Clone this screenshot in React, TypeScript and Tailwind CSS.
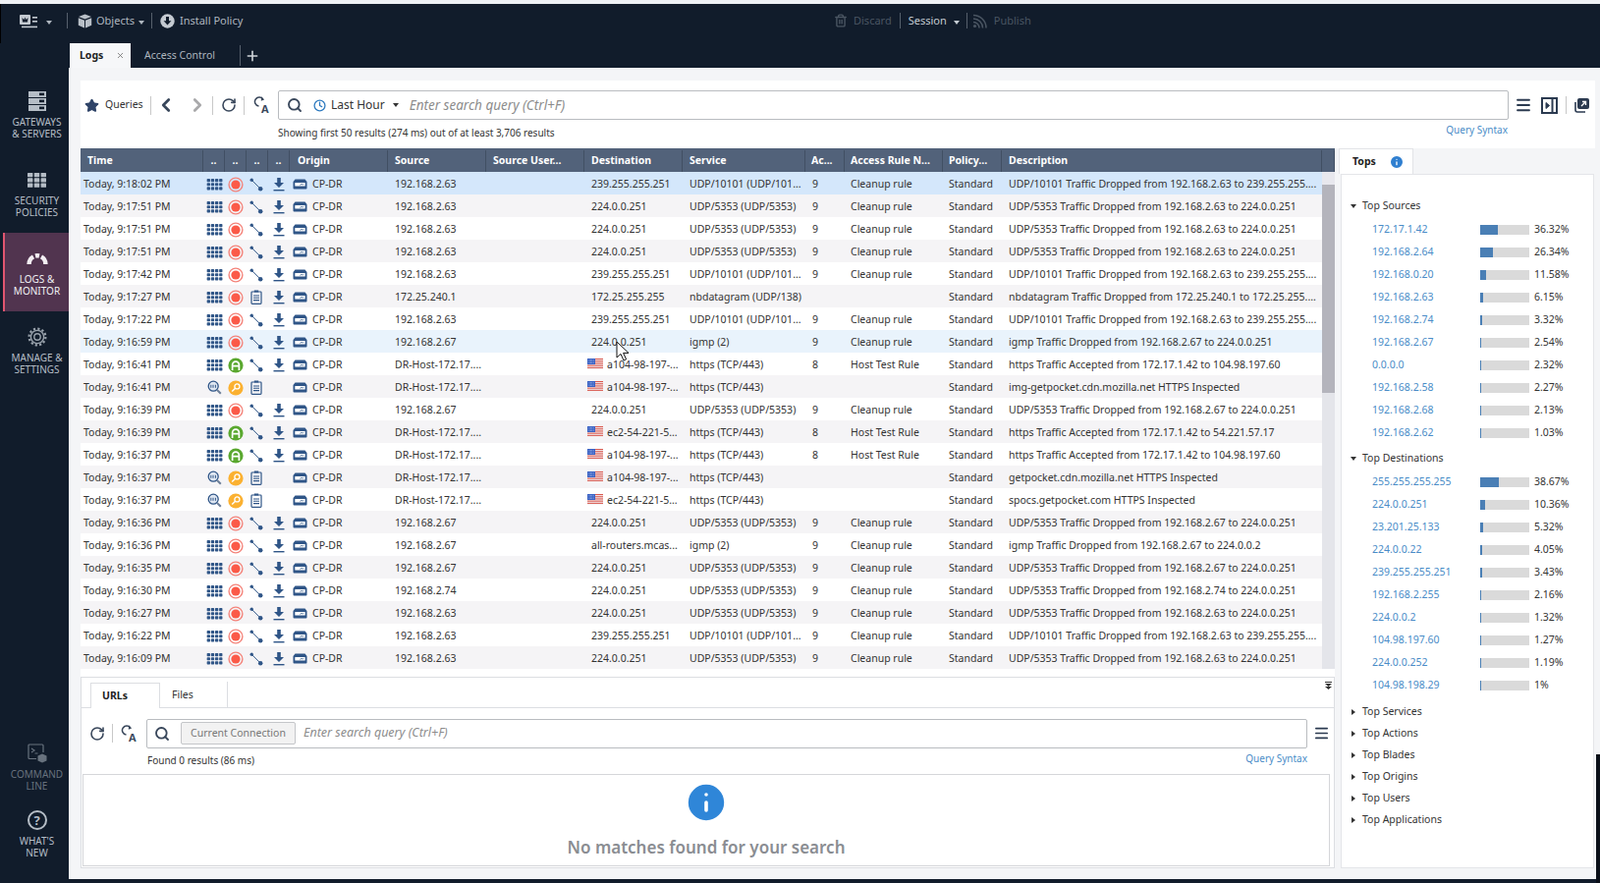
import React from 'react';
import { ChevronLeft, ChevronRight, Clock, Info, Menu, Plus, RotateCw, Search, Star, Trash2, X } from 'lucide-react';

const BLUE = '#2f5587';

const Caret = ({ className = 'border-t-[#aeb6bf]' }: { className?: string }) => (
  <span className={`inline-block w-0 h-0 border-x-[3.5px] border-x-transparent border-t-[4px] ${className}`} />
);

const GridIcon = () => (
  <svg width="17" height="12" viewBox="0 0 17 13" fill={BLUE}>
    {[0, 4.5, 9].map((y) =>
      [0, 4.5, 9, 13.5].map((x) => <rect key={`${x}-${y}`} x={x} y={y} width="3.6" height="3.4" rx="0.8" />)
    )}
  </svg>
);

const DropIcon = () => (
  <svg width="16" height="16" viewBox="0 0 16 16">
    <circle cx="8" cy="8" r="6.9" fill="none" stroke="#f4837a" strokeWidth="1.4" />
    <circle cx="8" cy="8" r="4.6" fill="#fb5a48" />
  </svg>
);

const AcceptIcon = () => (
  <svg width="16" height="16" viewBox="0 0 16 16">
    <circle cx="8" cy="8" r="7.6" fill="#5aa82f" />
    <path d="M4.6 13V7.5A3.4 3.4 0 0 1 11.4 7.5V13M4.6 8.6H11.4" fill="none" stroke="#fff" strokeWidth="1.7" />
  </svg>
);

const KeyIcon = () => (
  <svg width="16" height="16" viewBox="0 0 16 16">
    <circle cx="8" cy="8" r="7.6" fill="#fbb131" />
    <circle cx="9.4" cy="6.4" r="2.5" fill="none" stroke="#fff" strokeWidth="1.3" />
    <path d="M7.6 8.2 4.2 11.6" stroke="#fff" strokeWidth="1.4" />
  </svg>
);

const InspectIcon = () => (
  <svg width="15" height="15" viewBox="0 0 15 15">
    <circle cx="6.2" cy="6.2" r="5" fill="#dfe7f2" stroke={BLUE} strokeWidth="1.3" />
    <path d="M3.8 4.8v3M6 4.8v3M8.4 4.8v3" stroke={BLUE} strokeWidth="1" />
    <path d="M10 10l3.8 3.8" stroke="#6d7f99" strokeWidth="2" />
  </svg>
);

const NodesIcon = () => (
  <svg width="14" height="14" viewBox="0 0 15 15" fill={BLUE}>
    <path d="M2.5 2.5 12 12" stroke={BLUE} strokeWidth="1" />
    <circle cx="2.4" cy="2.4" r="1.8" />
    <circle cx="12" cy="12" r="2.4" />
  </svg>
);

const DocIcon = () => (
  <svg width="12" height="15" viewBox="0 0 12 15" fill="none" stroke={BLUE}>
    <rect x="1" y="2" width="10" height="12.4" rx="0.8" strokeWidth="1.2" />
    <path d="M3.8 1.5h4.4" strokeWidth="2" />
    <path d="M3 6h6M3 8.3h6M3 10.6h6" strokeWidth="1.1" />
  </svg>
);

const DownloadIcon = () => (
  <svg width="12" height="14" viewBox="0 0 12 14" fill={BLUE}>
    <path d="M4.2 0h3.6v5H11L6 10 1 5h3.2z" />
    <rect x="0.5" y="12" width="11" height="1.4" />
  </svg>
);

const GatewayIcon = () => (
  <svg width="15" height="11" viewBox="0 0 15 11">
    <path d="M2.5 0.5h10l2 2.5v6.5a1 1 0 0 1-1 1h-12a1 1 0 0 1-1-1V3z" fill={BLUE} />
    <rect x="2.3" y="4" width="10.4" height="3.6" rx="0.6" fill="#fff" />
    <path d="M7.5 6.6 9 5.2l1 1 1-1" stroke={BLUE} strokeWidth="0.8" fill="none" />
  </svg>
);

const Flag = () => (
  <svg width="16" height="11" viewBox="0 0 16 11" className="shrink-0 -mt-[2px]">
    <rect width="16" height="11" fill="#f4f0f0" />
    {[0, 2.2, 4.4, 6.6, 8.8].map((y) => (
      <rect key={y} y={y} width="16" height="1.1" fill="#d9584f" />
    ))}
    <rect width="8" height="6" fill="#3a62c4" />
    <path d="M1.5 1.5h5M1.5 3h5M1.5 4.5h5" stroke="#cfdaf5" strokeWidth="0.6" strokeDasharray="0.8 0.7" />
  </svg>
);

const RefreshA = ({ color = '#39475b' }: { color?: string }) => (
  <svg width="19" height="20" viewBox="0 0 19 20" fill="none">
    <path d="M10 4.5A4.5 4.5 0 1 0 5.5 11" stroke={color} strokeWidth="1.5" />
    <path d="M8 1.2l3 3.2-3.2 1.4z" fill={color} />
    <text x="8" y="18" fontSize="11" fontWeight="700" fill={color} fontFamily="Open Sans, sans-serif">A</text>
  </svg>
);

type Row = {
  time: string;
  a: 'drop' | 'accept' | 'key';
  nodes: boolean;
  src: string;
  dst: string;
  flag?: boolean;
  svc: string;
  ac: string;
  rule: string;
  desc: string;
};

const udp10101 = 'UDP/10101 (UDP/101...';
const udp5353 = 'UDP/5353 (UDP/5353)';
const host = 'DR-Host-172.17....';
const https = 'https (TCP/443)';
const a104 = 'a104-98-197-...';
const ec2 = 'ec2-54-221-5...';

const drop10101 = (time: string): Row => ({
  time, a: 'drop', nodes: true, src: '192.168.2.63', dst: '239.255.255.251', svc: udp10101, ac: '9', rule: 'Cleanup rule',
  desc: 'UDP/10101 Traffic Dropped from 192.168.2.63 to 239.255.255....',
});
const drop5353 = (time: string, src: string): Row => ({
  time, a: 'drop', nodes: true, src, dst: '224.0.0.251', svc: udp5353, ac: '9', rule: 'Cleanup rule',
  desc: `UDP/5353 Traffic Dropped from ${src} to 224.0.0.251`,
});
const accept = (time: string, dst: string, to: string): Row => ({
  time, a: 'accept', nodes: true, src: host, dst, flag: true, svc: https, ac: '8', rule: 'Host Test Rule',
  desc: `https Traffic Accepted from 172.17.1.42 to ${to}`,
});
const inspect = (time: string, dst: string, desc: string): Row => ({
  time, a: 'key', nodes: false, src: host, dst, flag: true, svc: https, ac: '', rule: '', desc,
});

const rows: Row[] = [
  drop10101('Today, 9:18:02 PM'),
  drop5353('Today, 9:17:51 PM', '192.168.2.63'),
  drop5353('Today, 9:17:51 PM', '192.168.2.63'),
  drop5353('Today, 9:17:51 PM', '192.168.2.63'),
  drop10101('Today, 9:17:42 PM'),
  {
    time: 'Today, 9:17:27 PM', a: 'drop', nodes: false, src: '172.25.240.1', dst: '172.25.255.255', svc: 'nbdatagram (UDP/138)', ac: '', rule: '',
    desc: 'nbdatagram Traffic Dropped from 172.25.240.1 to 172.25.255....',
  },
  drop10101('Today, 9:17:22 PM'),
  {
    time: 'Today, 9:16:59 PM', a: 'drop', nodes: true, src: '192.168.2.67', dst: '224.0.0.251', svc: 'igmp (2)', ac: '9', rule: 'Cleanup rule',
    desc: 'igmp Traffic Dropped from 192.168.2.67 to 224.0.0.251',
  },
  accept('Today, 9:16:41 PM', a104, '104.98.197.60'),
  inspect('Today, 9:16:41 PM', a104, 'img-getpocket.cdn.mozilla.net HTTPS Inspected'),
  drop5353('Today, 9:16:39 PM', '192.168.2.67'),
  accept('Today, 9:16:39 PM', ec2, '54.221.57.17'),
  accept('Today, 9:16:37 PM', a104, '104.98.197.60'),
  inspect('Today, 9:16:37 PM', a104, 'getpocket.cdn.mozilla.net HTTPS Inspected'),
  inspect('Today, 9:16:37 PM', ec2, 'spocs.getpocket.com HTTPS Inspected'),
  drop5353('Today, 9:16:36 PM', '192.168.2.67'),
  {
    time: 'Today, 9:16:36 PM', a: 'drop', nodes: true, src: '192.168.2.67', dst: 'all-routers.mcas...', svc: 'igmp (2)', ac: '9', rule: 'Cleanup rule',
    desc: 'igmp Traffic Dropped from 192.168.2.67 to 224.0.0.2',
  },
  drop5353('Today, 9:16:35 PM', '192.168.2.67'),
  drop5353('Today, 9:16:30 PM', '192.168.2.74'),
  drop5353('Today, 9:16:27 PM', '192.168.2.63'),
  drop10101('Today, 9:16:22 PM'),
  drop5353('Today, 9:16:09 PM', '192.168.2.63'),
];

const headers: [string, string][] = [
  ['Time', 'pl-[7px]'],
  ['..', 'justify-center'],
  ['..', 'justify-center'],
  ['..', 'justify-center'],
  ['..', 'justify-center'],
  ['Origin', 'pl-[8px]'],
  ['Source', 'pl-[7px]'],
  ['Source User...', 'pl-[7px]'],
  ['Destination', 'pl-[7px]'],
  ['Service', 'pl-[7px]'],
  ['Ac...', 'pl-[6px]'],
  ['Access Rule N...', 'pl-[6px]'],
  ['Policy...', 'pl-[6px]'],
  ['Description', 'pl-[7px]'],
  ['', ''],
];

const topSources: [string, string][] = [
  ['172.17.1.42', '36.32'], ['192.168.2.64', '26.34'], ['192.168.0.20', '11.58'], ['192.168.2.63', '6.15'], ['192.168.2.74', '3.32'],
  ['192.168.2.67', '2.54'], ['0.0.0.0', '2.32'], ['192.168.2.58', '2.27'], ['192.168.2.68', '2.13'], ['192.168.2.62', '1.03'],
];
const topDestinations: [string, string][] = [
  ['255.255.255.255', '38.67'], ['224.0.0.251', '10.36'], ['23.201.25.133', '5.32'], ['224.0.0.22', '4.05'], ['239.255.255.251', '3.43'],
  ['192.168.2.255', '2.16'], ['224.0.0.2', '1.32'], ['104.98.197.60', '1.27'], ['224.0.0.252', '1.19'], ['104.98.198.29', '1'],
];

const NavItem = ({ icon, lines, active, dim }: { icon: React.ReactNode; lines: string[]; active?: boolean; dim?: boolean }) => (
  <div
    className={`flex flex-col items-center ml-[3px] w-[67px] h-[80px] pt-[14px] border-l-[2px] ${
      active ? 'bg-[#51344f] border-[#e0566f] text-[#f0f0f3]' : dim ? 'border-transparent text-[#68727e]' : 'border-transparent text-[#b5bdc6]'
    }`}
  >
    <div className="h-[24px] flex items-center justify-center">{icon}</div>
    <div className="mt-[3px] text-center text-[10px] leading-[12px]">
      {lines.map((l) => (
        <div key={l}>{l}</div>
      ))}
    </div>
  </div>
);

const TopRow = ({ name, pct }: { name: string; pct: string }) => (
  <div className="flex items-center h-[23px] pl-[31px]">
    <div className="w-[110px] text-[#4a8cc7]">{name}</div>
    <div className="w-[50px] h-[10px] bg-[#dadada]">
      <div className="h-full bg-[#4a7fb5]" style={{ width: `${parseFloat(pct)}%` }} />
    </div>
    <div className="ml-[5px] text-[#333]">{pct}%</div>
  </div>
);

const TopHead = ({ label, open }: { label: string; open?: boolean }) => (
  <div className="flex items-center h-[22px] pl-[8px] gap-[6px] text-[#333]">
    <span className="w-[7px] flex justify-center">
      {open ? (
        <Caret className="border-t-[#333]" />
      ) : (
        <span className="inline-block w-0 h-0 border-y-[3.5px] border-y-transparent border-l-[4px] border-l-[#333]" />
      )}
    </span>
    {label}
  </div>
);

const LogRow = ({ row, i }: { row: Row; i: number }) => {
  const bg = i === 0 ? 'bg-[#d4e7fb]' : i === 7 ? 'bg-[#e9f3fc]' : i % 2 ? 'bg-[#f5f4f6]' : 'bg-white';
  return (
    <div className={`grid grid-cols-[125px_22px_22px_22px_22px_100px_100px_100px_100px_125px_40px_100px_60px_326px] h-[23px] pt-[2px] items-center whitespace-nowrap ${bg}`}>
      <div className="pl-[3px]">{row.time}</div>
      <div className="flex justify-center pl-[1px]">{row.a === 'key' ? <InspectIcon /> : <GridIcon />}</div>
      <div className="flex justify-center">
        {row.a === 'drop' ? <DropIcon /> : row.a === 'accept' ? <AcceptIcon /> : <KeyIcon />}
      </div>
      <div className="flex justify-center pr-[2px]">{row.nodes ? <NodesIcon /> : <DocIcon />}</div>
      <div className="flex justify-center pr-[1px]">{row.a === 'key' ? null : <DownloadIcon />}</div>
      <div className="flex items-center pl-[3px] gap-[5px]">
        <GatewayIcon />
        CP-DR
      </div>
      <div className="pl-[7px]">{row.src}</div>
      <div />
      {row.flag ? (
        <div className="flex items-center pl-[3px] gap-[4px]">
          <Flag />
          {row.dst}
        </div>
      ) : (
        <div className="pl-[7px]">{row.dst}</div>
      )}
      <div className="pl-[7px]">{row.svc}</div>
      <div className="pl-[7px]">{row.ac}</div>
      <div className="pl-[6px]">{row.rule}</div>
      <div className="pl-[6px]">Standard</div>
      <div className="pl-[7px] overflow-hidden">{row.desc}</div>
    </div>
  );
};

export default function App() {
  return (
    <div className="relative flex flex-col w-[1629px] h-[899px] overflow-hidden bg-[#111c2b] text-[10.5px] text-[#333] font-['Open_Sans',sans-serif]">
      <div className="h-[4px] shrink-0 bg-[#eef1f5]" />

      {/* top bar */}
      <div className="h-[40px] shrink-0 flex items-start pt-[9px] relative text-[11px] text-[#aeb6bf] border-l border-black">
        <div className="flex items-center h-[16px] pl-[19px]">
          <svg width="18" height="15" viewBox="0 0 18 15" fill="#c4cad1">
            <rect x="0" y="1" width="11" height="10" rx="1" />
            <rect x="13" y="3" width="5" height="1.6" />
            <rect x="13" y="7" width="5" height="1.6" />
            <rect x="2" y="12.6" width="16" height="1.6" />
            <path d="M2.5 4 4.5 6 5.5 3.5 6.5 6 8.5 4 8 8.5H3z" fill="#111c2b" />
          </svg>
          <span className="ml-[9px]"><Caret /></span>
          <span className="ml-[15px] h-[16px] border-l border-[#56606c]" />
          <svg className="ml-[10px]" width="15" height="15" viewBox="0 0 15 15" fill="#b8bfc7">
            <path d="M7.5 0.5 14 3 7.5 5.6 1 3z" />
            <path d="M0.8 4.2 7 6.7V14.5L0.8 11.8zM14.2 4.2 8 6.7V14.5L14.2 11.8z" />
          </svg>
          <span className="ml-[4px]">Objects</span>
          <span className="ml-[4px]"><Caret /></span>
          <span className="ml-[7px] h-[16px] border-l border-[#56606c]" />
          <svg className="ml-[8px]" width="15" height="15" viewBox="0 0 15 15">
            <circle cx="7.5" cy="7.5" r="7.2" fill="#c4cad1" />
            <path d="M6 3h3v4.2h2.4L7.5 11.6 3.6 7.2H6z" fill="#111c2b" />
          </svg>
          <span className="ml-[5px]">Install Policy</span>
        </div>
        <div className="flex items-center h-[16px] absolute left-[848px] top-[9px]">
          <Trash2 size={14} color="#4a5562" strokeWidth={2.4} />
          <span className="ml-[6px] text-[#4a5562]">Discard</span>
          <span className="ml-[8px] h-[16px] border-l border-[#56606c]" />
          <span className="ml-[8px] text-[#c5ccd3]">Session</span>
          <span className="ml-[7px]"><Caret className="border-t-[#c5ccd3]" /></span>
          <span className="ml-[7px] h-[16px] border-l border-[#56606c]" />
          <svg className="ml-[5px]" width="16" height="16" viewBox="0 0 16 16" fill="none" stroke="#4a5562" strokeWidth="1.5">
            <path d="M1 6a9.5 9.5 0 0 1 9.5 9.5M1 2.5a13 13 0 0 1 13 13M1 9.5a6 6 0 0 1 6 6" />
            <circle cx="2.5" cy="13.5" r="1.6" fill="#4a5562" stroke="none" />
          </svg>
          <span className="ml-[6px] text-[#4a5562]">Publish</span>
        </div>
      </div>

      {/* tab strip */}
      <div className="h-[25px] shrink-0 flex items-stretch pl-[71px] text-[#aeb6bf]">
        <div className="w-[62px] bg-[#f6f7f9] flex items-center pl-[10px] text-[#222] font-bold">
          Logs
          <X size={9} className="ml-[13px] text-[#666]" />
        </div>
        <div className="ml-[14px] flex items-center w-[97px]">Access Control</div>
        <div className="my-[2px] border-l border-[#56606c]" />
        <div className="ml-[4px] flex items-center">
          <Plus size={16} color="#d0d5da" strokeWidth={2.4} />
        </div>
      </div>

      <div className="flex-1 flex min-h-0">
        {/* sidebar */}
        <nav className="w-[71px] shrink-0 flex flex-col pt-[8px] pb-[22px] border-l border-black -ml-px">
          <NavItem
            lines={['GATEWAYS', '& SERVERS']}
            icon={
              <svg width="18" height="20" viewBox="0 0 18 20" fill="#b5bdc6">
                {[0, 7, 14].map((y) => (
                  <g key={y}>
                    <rect y={y} width="18" height="6" />
                    <rect x="11" y={y + 1.6} width="5" height="2.6" fill="#111c2b" />
                  </g>
                ))}
              </svg>
            }
          />
          <NavItem
            lines={['SECURITY', 'POLICIES']}
            icon={
              <svg width="19" height="15" viewBox="0 0 19 15" fill="#b5bdc6">
                {[0, 5.3, 10.6].map((y) =>
                  [0, 6.8, 13.6].map((x) => <rect key={`${x}-${y}`} x={x} y={y} width="5.4" height="4.2" rx="0.6" />)
                )}
              </svg>
            }
          />
          <NavItem
            active
            lines={['LOGS &', 'MONITOR']}
            icon={
              <svg width="22" height="14" viewBox="0 0 22 14" fill="none" stroke="#f3eef3" strokeWidth="4.5">
                <path d="M2.6 13A8.6 8.6 0 0 1 7 5.4M9 4.5a8.6 8.6 0 0 1 4 0M15 5.4A8.6 8.6 0 0 1 19.4 13" />
              </svg>
            }
          />
          <NavItem
            lines={['MANAGE &', 'SETTINGS']}
            icon={
              <svg width="20" height="20" viewBox="0 0 20 20" fill="none" stroke="#99a2ac">
                <circle cx="10" cy="10" r="6.6" strokeWidth="1.4" />
                <circle cx="10" cy="10" r="3.2" strokeWidth="1.4" />
                <circle cx="10" cy="10" r="8.4" strokeWidth="2.2" strokeDasharray="2.2 2.2" />
              </svg>
            }
          />
          <div className="flex-1" />
          <div className="h-[68px] overflow-visible">
            <NavItem
              dim
              lines={['COMMAND', 'LINE']}
              icon={
                <svg width="20" height="20" viewBox="0 0 20 20" fill="none" stroke="#68727e" strokeWidth="1.2">
                  <path d="M9 15.5H2a1 1 0 0 1-1-1V2a1 1 0 0 1 1-1h13a1 1 0 0 1 1 1v7" />
                  <path d="M4 5l3 2-3 2M7.5 10h3" />
                  <path d="M15 10.5l4.5 2v5l-4.5 2-4.5-2v-5z" fill="#68727e" stroke="none" />
                </svg>
              }
            />
          </div>
          <div className="h-[68px] overflow-visible">
            <NavItem
              lines={["WHAT'S", 'NEW']}
              icon={
                <div className="w-[20px] h-[20px] rounded-full border-[2px] border-[#b5bdc6] flex items-center justify-center text-[13px] font-bold leading-none text-[#b5bdc6]">
                  ?
                </div>
              }
            />
          </div>
        </nav>

        {/* main area */}
        <main className="w-[1555px] mb-[4px] shrink-0 bg-[#f4f5f7] pt-[13px] pl-[12px] flex flex-col min-h-0">
          {/* toolbar */}
          <div className="h-[69px] w-[1542px] shrink-0 bg-white pt-[2px]">
            <div className="flex items-center h-[46px] pl-[4px]">
              <Star size={15} fill="#2f4468" color="#2f4468" />
              <span className="ml-[6px] w-[40px]">Queries</span>
              <span className="ml-[6px] h-[19px] border-l border-[#c8c8c8]" />
              <ChevronLeft size={22} color="#39475b" strokeWidth={3} className="ml-[4px]" />
              <ChevronRight size={22} color="#a9a9ab" strokeWidth={3} className="ml-[10px]" />
              <span className="ml-[4px] h-[19px] border-l border-[#c8c8c8]" />
              <RotateCw size={16} color="#39475b" strokeWidth={2.4} className="ml-[8px]" />
              <span className="ml-[7px] h-[19px] border-l border-[#c8c8c8]" />
              <span className="ml-[9px]"><RefreshA /></span>
              <div className="ml-[6px] w-[1253px] h-[30px] flex items-center border border-[#b9bcc0] rounded-[2px] pl-[8px]">
                <Search size={16} color="#39475b" strokeWidth={2.8} />
                <Clock size={13} color="#2f7bc0" strokeWidth={2.4} className="ml-[11px]" />
                <span className="ml-[5px] text-[12px]">Last Hour</span>
                <span className="ml-[8px] flex"><Caret className="border-t-[#333]" /></span>
                <span className="ml-[11px] italic text-[13.5px] text-[#8c8c8c]">Enter search query (Ctrl+F)</span>
              </div>
              <Menu size={18} color="#2b3a50" strokeWidth={2.4} className="ml-[6px]" />
              <svg className="ml-[9px]" width="17" height="17" viewBox="0 0 17 17" fill="none" stroke="#2b3a50">
                <rect x="1" y="1" width="15" height="15" strokeWidth="2" />
                <path d="M11.5 1v15" strokeWidth="2" />
                <path d="M5 5.5 8.5 8.5 5 11.5z" fill="#2b3a50" />
              </svg>
              <span className="ml-[8px] h-[18px] border-l border-[#c8c8c8]" />
              <svg className="ml-[8px]" width="15" height="15" viewBox="0 0 15 15">
                <rect x="3" y="0" width="12" height="11" rx="2" fill="#2b3a50" />
                <path d="M1 4v8a2 2 0 0 0 2 2h8" fill="none" stroke="#2b3a50" strokeWidth="1.6" />
                <path d="M7 8l4-4M8 3.5h3.5V7" stroke="#fff" strokeWidth="1.3" fill="none" />
              </svg>
            </div>
            <div className="flex justify-between w-[1453px] pl-[201px] -mt-[1px] leading-[12px] text-[10px]">
              <span>Showing first 50 results (274 ms) out of at least 3,706 results</span>
              <span className="text-[#4a8cc7] -mt-[3px]">Query Syntax</span>
            </div>
          </div>

          <div className="flex-1 flex min-h-0 mb-[11px]">
            {/* log table + details */}
            <div className="w-[1277px] shrink-0 flex flex-col bg-white">
              <div className="grid grid-cols-[125px_22px_22px_22px_22px_100px_100px_100px_100px_125px_40px_100px_60px_326px_13px] h-[24px] pt-[2px] shrink-0 bg-[#52627a] text-white font-bold whitespace-nowrap">
                {headers.map(([h, cls], i) => (
                  <div key={i} className={`flex items-center border-r border-[#414f63] ${cls}`}>
                    {h}
                  </div>
                ))}
              </div>
              <div className="h-[506px] shrink-0 flex">
                <div className="w-[1264px] overflow-hidden">
                  {rows.map((row, i) => (
                    <LogRow key={i} row={row} i={i} />
                  ))}
                </div>
                <div className="w-[13px] bg-[#e4e5ea]">
                  <div className="h-[13px] bg-[#e8e8ee]" />
                  <div className="h-[212px] bg-[#b4b4bc]" />
                </div>
              </div>

              {/* details pane */}
              <div className="mt-[8px] flex-1 flex flex-col border border-[#dcdee2] bg-white min-h-0">
                <div className="relative h-[31px] shrink-0 flex items-end pl-[9px] border-b border-[#dcdee2]">
                  <div className="w-[71px] h-[26px] pt-[1px] -mb-px bg-white border border-b-0 border-[#dcdee2] flex items-center pl-[11px] font-bold text-[#222]">
                    URLs
                  </div>
                  <div className="w-[69px] h-[26px] pt-[2px] flex items-center pl-[12px] border-r border-[#dcdee2]">Files</div>
                  <svg className="absolute right-[2px] top-[4px]" width="7" height="9" viewBox="0 0 7 9" fill="#333">
                    <path d="M0 0h7v1H0zM0 2h7L3.5 5zM0 5h7L3.5 8z" />
                  </svg>
                </div>
                <div className="flex items-center h-[41px] pt-[10px] shrink-0 pl-[8px]">
                  <RotateCw size={16} color="#39475b" strokeWidth={2.4} />
                  <span className="ml-[7px] h-[19px] border-l border-[#c8c8c8]" />
                  <span className="ml-[8px]"><RefreshA /></span>
                  <div className="ml-[7px] w-[1182px] h-[30px] flex items-center border border-[#b9bcc0] rounded-[2px] pl-[7px]">
                    <Search size={16} color="#39475b" strokeWidth={2.8} />
                    <span className="ml-[11px] w-[117px] h-[23px] bg-[#f2f2f2] border border-[#c4c6c9] rounded-[2px] flex items-center justify-center text-[#777] text-[10.5px]">
                      Current Connection
                    </span>
                    <span className="ml-[8px] italic text-[12.5px] text-[#8c8c8c]">Enter search query (Ctrl+F)</span>
                  </div>
                  <Menu size={17} color="#2b3a50" strokeWidth={2.4} className="ml-[6px]" />
                </div>
                <div className="flex justify-between shrink-0 w-[1248px] pl-[67px] pt-[5px] h-[26px] text-[10px]">
                  <span>Found 0 results (86 ms)</span>
                  <span className="text-[#4a8cc7] -mt-[2px]">Query Syntax</span>
                </div>
                <div className="flex-1 mx-[1px] mb-[1px] mr-[4px] border border-[#d5d6d9] flex flex-col items-center pt-[4px]">
                  <Info size={48} fill="#2f86d8" color="#ffffff" strokeWidth={1.8} />
                  <div className="mt-[9px] text-[17px] font-semibold text-[#8a8d92]">No matches found for your search</div>
                </div>
              </div>
            </div>

            {/* tops panel */}
            <div className="ml-[4px] w-[260px] shrink-0 flex flex-col">
              <div className="w-[76px] h-[26px] shrink-0 bg-white border border-b-0 border-[#e2e3e7] flex items-center pl-[13px] font-bold text-[#222] gap-[13px]">
                Tops
                <Info size={16} fill="#2f7fd0" color="#ffffff" strokeWidth={2} />
              </div>
              <div className="flex-1 ml-[2px] w-[258px] bg-white border border-[#e4e5e9] pt-[21px]">
                <TopHead label="Top Sources" open />
                <div className="mt-[1px]">
                  {topSources.map(([n, p]) => (
                    <TopRow key={n} name={n} pct={p} />
                  ))}
                </div>
                <div className="mt-[4px]">
                  <TopHead label="Top Destinations" open />
                </div>
                <div className="mt-[1px]">
                  {topDestinations.map(([n, p]) => (
                    <TopRow key={n} name={n} pct={p} />
                  ))}
                </div>
                <div className="mt-[5px]">
                  {['Top Services', 'Top Actions', 'Top Blades', 'Top Origins', 'Top Users', 'Top Applications'].map((l) => (
                    <TopHead key={l} label={l} />
                  ))}
                </div>
              </div>
            </div>
          </div>
        </main>

        {/* desktop behind the window */}
        <div className="flex-1 flex flex-col">
          <div className="h-[699px] bg-[#f4f5f7]" />
          <div className="flex-1 bg-[#0a0f18]" />
        </div>
      </div>

      {/* mouse pointer */}
      <svg className="absolute left-[627px] top-[347px]" width="14" height="22" viewBox="0 0 14 22">
        <path d="M1 1v16l4-3.6 3 6.6 2.6-1.2-3-6.4H13z" fill="#fff" stroke="#111" strokeWidth="1" />
      </svg>
    </div>
  );
}
